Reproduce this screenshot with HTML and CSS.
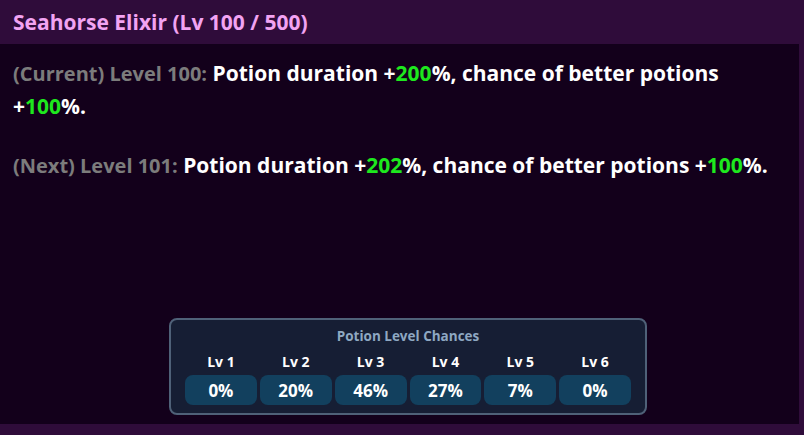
FILE: index.html
```html
<!DOCTYPE html>
<html lang="en">
<head>
  <meta charset="UTF-8" />
  <title>Seahorse Elixir</title>
  <link rel="stylesheet" href="styles.css">
</head>
<body>
  <div class="window">
    <div class="title-bar">Seahorse Elixir (Lv 100 / 500)</div>

    <div class="content">
      <p class="level-line">
        <span class="tag">(Current) Level 100:</span> Potion duration +<span class="num">200</span>%, chance of better potions +<span class="num">100</span>%.
      </p>
      <p class="level-line next">
        <span class="tag">(Next) Level 101:</span> Potion duration +<span class="num">202</span>%, chance of better potions +<span class="num">100</span>%.
      </p>

      <div class="chances">
        <div class="chances-title">Potion Level Chances</div>
        <div class="chances-grid">
          <div class="chance"><span class="chance-lv">Lv 1</span><span class="chance-val">0%</span></div>
          <div class="chance"><span class="chance-lv">Lv 2</span><span class="chance-val">20%</span></div>
          <div class="chance"><span class="chance-lv">Lv 3</span><span class="chance-val">46%</span></div>
          <div class="chance"><span class="chance-lv">Lv 4</span><span class="chance-val">27%</span></div>
          <div class="chance"><span class="chance-lv">Lv 5</span><span class="chance-val">7%</span></div>
          <div class="chance"><span class="chance-lv">Lv 6</span><span class="chance-val">0%</span></div>
        </div>
      </div>
    </div>
  </div>
</body>
</html>
```

FILE: styles.css
```css
* {
  box-sizing: border-box;
}

body {
  margin: 0;
  background: #2f0c3a;
  font-family: 'Open Sans', 'Liberation Sans', sans-serif;
  font-weight: 700;
  color: #fff;
}

.window {
  width: 804px;
  height: 435px;
  display: flex;
  flex-direction: column;
}

.title-bar {
  height: 44px;
  padding-left: 13px;
  display: flex;
  align-items: center;
  font-size: 21px;
  color: #f2a3f2;
}

.content {
  width: 799px;
  height: 380px;
  background: #13001b;
  padding: 13px 22px 9px 13px;
  display: flex;
  flex-direction: column;
}

.level-line {
  margin: 0;
  font-size: 21px;
  line-height: 32px;
}

.level-line.next {
  margin-top: 27px;
}

.tag {
  color: #7c7c7c;
  font-size: 20px;
}

.num {
  color: #1ee81e;
}

.chances {
  margin-top: auto;
  margin-left: 156px;
  width: 478px;
  height: 97px;
  background: #161e34;
  border: 2px solid #4f6178;
  border-radius: 8px;
  padding: 7px 14px 0;
}

.chances-title {
  text-align: center;
  font-size: 13.5px;
  color: #8ea8c2;
  margin-bottom: 7px;
}

.chances-grid {
  display: grid;
  grid-template-columns: repeat(6, 1fr);
  gap: 3px;
}

.chance {
  display: flex;
  flex-direction: column;
  align-items: center;
  gap: 4px;
}

.chance-lv {
  font-size: 14px;
}

.chance-val {
  width: 100%;
  height: 30px;
  background: #12405e;
  border-radius: 8px;
  display: flex;
  align-items: center;
  justify-content: center;
  font-size: 17px;
}
```
